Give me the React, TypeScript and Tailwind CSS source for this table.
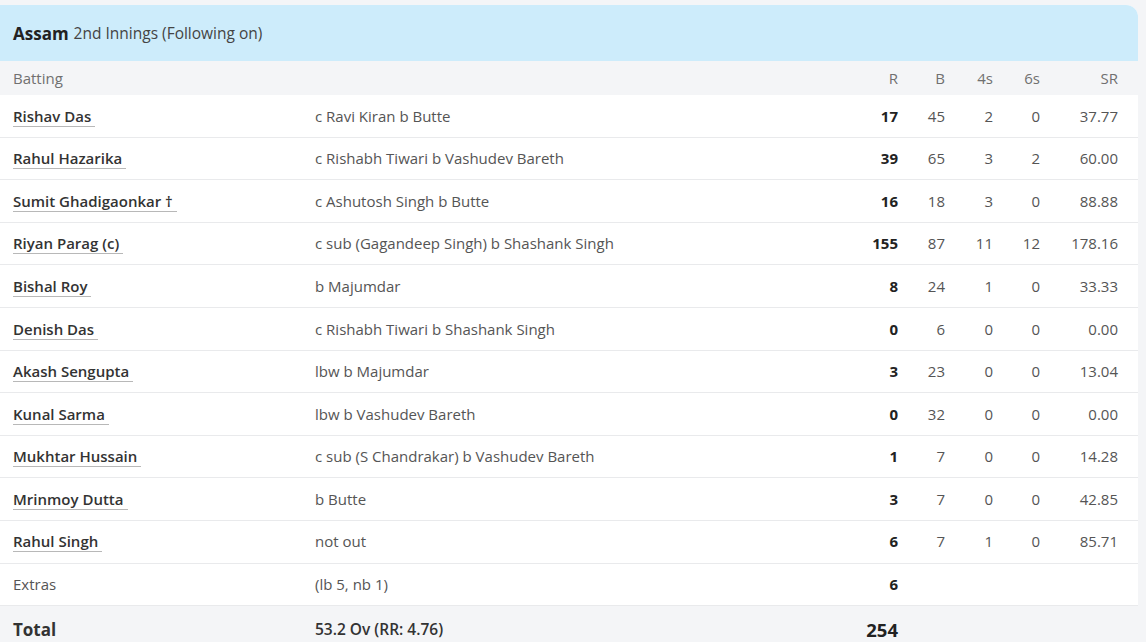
const batters = [
  { name: "Rishav Das", out: "c Ravi Kiran b Butte", r: "17", b: "45", f: "2", s: "0", sr: "37.77" },
  { name: "Rahul Hazarika", out: "c Rishabh Tiwari b Vashudev Bareth", r: "39", b: "65", f: "3", s: "2", sr: "60.00" },
  { name: "Sumit Ghadigaonkar †", out: "c Ashutosh Singh b Butte", r: "16", b: "18", f: "3", s: "0", sr: "88.88" },
  { name: "Riyan Parag (c)", out: "c sub (Gagandeep Singh) b Shashank Singh", r: "155", b: "87", f: "11", s: "12", sr: "178.16" },
  { name: "Bishal Roy", out: "b Majumdar", r: "8", b: "24", f: "1", s: "0", sr: "33.33" },
  { name: "Denish Das", out: "c Rishabh Tiwari b Shashank Singh", r: "0", b: "6", f: "0", s: "0", sr: "0.00" },
  { name: "Akash Sengupta", out: "lbw b Majumdar", r: "3", b: "23", f: "0", s: "0", sr: "13.04" },
  { name: "Kunal Sarma", out: "lbw b Vashudev Bareth", r: "0", b: "32", f: "0", s: "0", sr: "0.00" },
  { name: "Mukhtar Hussain", out: "c sub (S Chandrakar) b Vashudev Bareth", r: "1", b: "7", f: "0", s: "0", sr: "14.28" },
  { name: "Mrinmoy Dutta", out: "b Butte", r: "3", b: "7", f: "0", s: "0", sr: "42.85" },
  { name: "Rahul Singh", out: "not out", r: "6", b: "7", f: "1", s: "0", sr: "85.71" },
];

const grid = "grid grid-cols-[302px_1fr_60px_47px_48px_47px_78px] items-center pl-[13px] pr-5";

export default function App() {
  return (
    <div className="min-h-screen bg-[#f4f5f7] pt-[5px] pr-2 text-[15px] font-['Open_Sans','Liberation_Sans',sans-serif]">
      <div className="bg-white rounded-tr-[12px] overflow-hidden">
        <div className="h-[56px] bg-[#cdecfb] flex items-center pl-[13px] pt-[1px]">
          <span className="text-[17px] font-bold text-[#222]">Assam</span>
          <span className="ml-[5px] text-[15.5px] text-[#444]">2nd Innings (Following on)</span>
        </div>

        <div className={`${grid} h-[34px] bg-[#f4f5f7] text-[#707070]`}>
          <div>Batting</div>
          <div></div>
          <div className="text-right">R</div>
          <div className="text-right">B</div>
          <div className="text-right">4s</div>
          <div className="text-right">6s</div>
          <div className="text-right">SR</div>
        </div>

        {batters.map((p) => (
          <div key={p.name} className={`${grid} h-[42.6px] border-b border-[#e9eaec] text-[#555]`}>
            <div>
              <span className="inline-block pr-[4px] leading-[19px] border-b border-[#b8b8b8] font-semibold text-[#333]">
                {p.name}
              </span>
            </div>
            <div>{p.out}</div>
            <div className="text-right font-bold text-[#222]">{p.r}</div>
            <div className="text-right">{p.b}</div>
            <div className="text-right">{p.f}</div>
            <div className="text-right">{p.s}</div>
            <div className="text-right">{p.sr}</div>
          </div>
        ))}

        <div className={`${grid} h-[42.6px] border-b border-[#e9eaec] text-[#555]`}>
          <div>Extras</div>
          <div>(lb 5, nb 1)</div>
          <div className="text-right font-bold text-[#222]">6</div>
          <div></div>
          <div></div>
          <div></div>
          <div></div>
        </div>

        <div className={`${grid} h-[46px] bg-[#f4f5f7] pt-[1px] text-[#333]`}>
          <div className="text-[17px] font-bold">Total</div>
          <div className="text-[15.5px] font-semibold">53.2 Ov (RR: 4.76)</div>
          <div className="text-right text-[18.5px] font-bold text-[#222]">254</div>
          <div></div>
          <div></div>
          <div></div>
          <div></div>
        </div>
      </div>
    </div>
  );
}
